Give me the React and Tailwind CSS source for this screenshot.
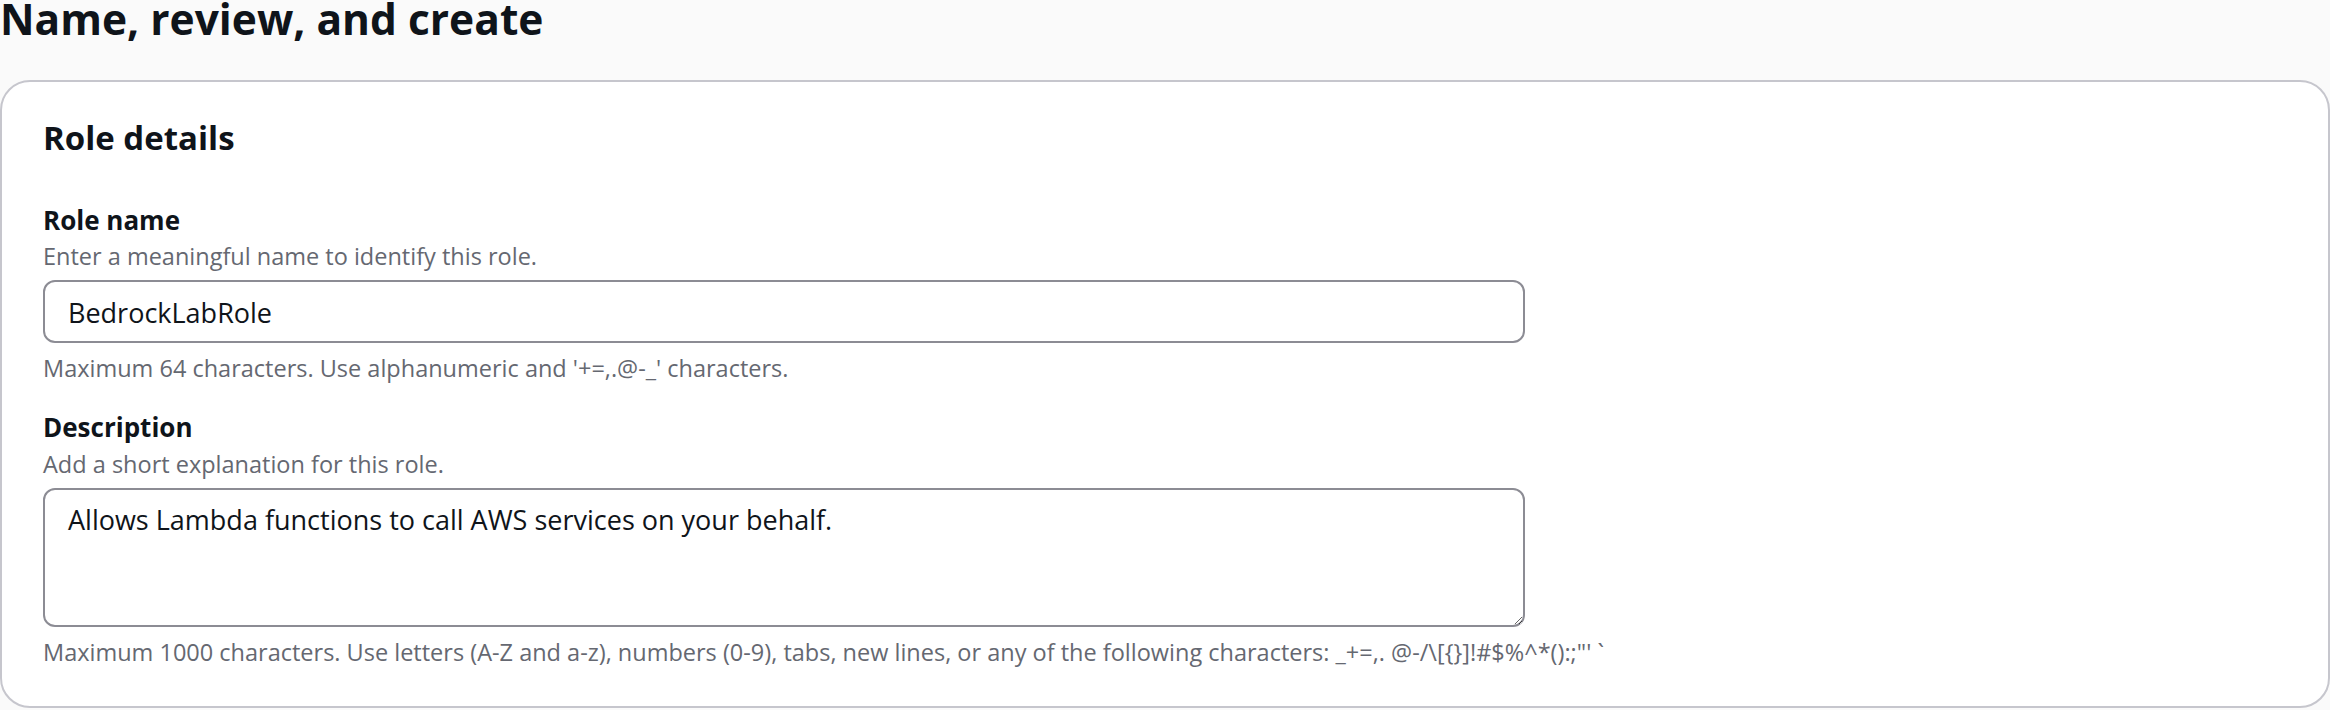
import React from "react";

export default function App() {
  return (
    <div className="w-[2330px] h-[710px] bg-[#fafafa] text-[#0f141a] overflow-hidden font-['Open_Sans',Roboto,sans-serif]">
      <h1 className="text-[42.5px] leading-[38px] font-bold">
        Name, review, and create
      </h1>

      <div className="mt-[42px] h-[628px] bg-white border-2 border-[#c6c6cd] rounded-[30px] pl-[41px] pt-[38px]">
        <h2 className="text-[33px] leading-[36px] font-bold">Role details</h2>

        <div className="mt-[49px]">
          <label className="block text-[26px] leading-[30px] font-bold">
            Role name
          </label>
          <p className="mt-[7px] text-[23.5px] leading-[28px] text-[#656871]">
            Enter a meaningful name to identify this role.
          </p>
          <input
            readOnly
            defaultValue="BedrockLabRole"
            className="mt-[10px] block w-[1482px] h-[63px] border-2 border-[#8c8c94] rounded-[12px] pl-[23px] pt-[13px] pb-[12px] text-[27px] leading-[34px] text-[#0f141a] bg-white outline-none"
          />
          <p className="mt-[11px] text-[23.5px] leading-[28px] text-[#656871]">
            Maximum 64 characters. Use alphanumeric and '+=,.@-_' characters.
          </p>
        </div>

        <div className="mt-[30px]">
          <label className="block text-[26px] leading-[30px] font-bold">
            Description
          </label>
          <p className="mt-[8px] text-[23.5px] leading-[28px] text-[#656871]">
            Add a short explanation for this role.
          </p>
          <textarea
            readOnly
            defaultValue="Allows Lambda functions to call AWS services on your behalf."
            className="mt-[10px] block w-[1482px] h-[139px] border-2 border-[#8c8c94] rounded-[12px] pl-[23px] pt-[13px] text-[27px] leading-[34px] text-[#0f141a] bg-white outline-none"
          />
          <p className="mt-[11px] text-[23.5px] leading-[28px] text-[#656871]">
            Maximum 1000 characters. Use letters (A-Z and a-z), numbers (0-9),
            tabs, new lines, or any of the following characters: _+=,.
            @-/\[{"{}"}]!#$%^*():;"' `
          </p>
        </div>
      </div>
    </div>
  );
}
